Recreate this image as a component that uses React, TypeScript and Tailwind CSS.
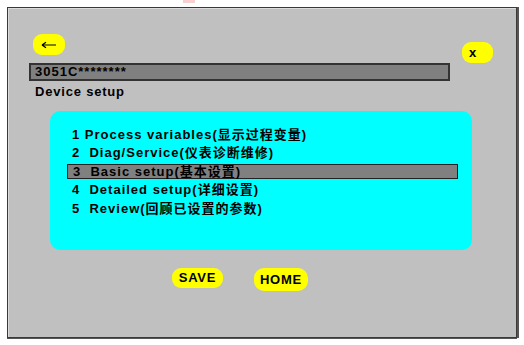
import React from "react";

const menuItems = [
  { label: "1 Process variables(显示过程变量)", selected: false },
  { label: "2  Diag/Service(仪表诊断维修)", selected: false },
  { label: "3  Basic setup(基本设置)", selected: true },
  { label: "4  Detailed setup(详细设置)", selected: false },
  { label: "5  Review(回顾已设置的参数)", selected: false },
];

const font = {
  fontFamily: '"Liberation Sans", "Noto Sans CJK SC", sans-serif',
};

const App: React.FC = () => {
  return (
    <div className="relative h-[345px] w-[524px] bg-white p-[7px]" style={font}>
      {/* faint mark cut at top edge */}
      <div className="absolute left-[183px] top-0 h-[3px] w-[12px] bg-[#f8d0d0]" />

      <div className="flex h-[331px] w-[510px] flex-col border border-[#3a3a3a] bg-[#c0c0c0] shadow-[inset_1px_1px_0_#dcdcdc,2px_0_0_#555,0_1px_0_#555]">
        {/* top row */}
        <div className="mt-[26px] flex items-start">
          <button className="ml-[25px] flex h-[21px] w-[32px] items-center justify-center rounded-[9px] bg-[#ffff00]">
            <svg width="16" height="8" viewBox="0 0 16 8">
              <path d="M1 4H15M1 4L5 1.2M1 4L5 6.8" stroke="#000" strokeWidth="1.2" fill="none" />
            </svg>
          </button>
          <button className="ml-auto mr-[23px] mt-[8px] flex h-[21px] w-[31px] items-center rounded-[9px] bg-[#ffff00] pl-[7px] text-[13px] font-bold leading-none text-black">
            x
          </button>
        </div>

        {/* device tag bar */}
        <div className="ml-[21px] flex h-[18px] w-[421px] items-center border-2 border-[#333] bg-[#808080] pl-[4px] text-[13px] font-bold tracking-[1px] text-black">
          3051C********
        </div>
        <div className="ml-[27px] mt-[3px] text-[13px] font-bold leading-[16px] tracking-[0.8px] text-black">
          Device setup
        </div>

        {/* menu panel */}
        <div className="ml-[42px] mt-[11px] flex h-[139px] w-[422px] flex-col rounded-[10px] bg-[#00ffff] pt-[14px]">
          {menuItems.map((item) => (
            <div key={item.label} className="flex h-[18.5px] items-center">
              <div
                className={`ml-[17px] flex h-[15px] w-[391px] items-center whitespace-pre pl-[5px] text-[13px] font-bold leading-none tracking-[1px] text-black ${
                  item.selected ? "border border-[#222] bg-[#808080]" : ""
                }`}
              >
                {item.label}
              </div>
            </div>
          ))}
        </div>

        {/* bottom buttons */}
        <div className="mt-[18px] flex items-start">
          <button className="ml-[164px] flex h-[20px] w-[51px] items-center justify-center rounded-[9px] bg-[#ffff00] text-[13px] font-bold tracking-[0.8px] text-black">
            SAVE
          </button>
          <button className="ml-[31px] flex h-[23px] w-[54px] items-center justify-center rounded-[10px] bg-[#ffff00] text-[13px] font-bold tracking-[0.8px] text-black">
            HOME
          </button>
        </div>
      </div>
    </div>
  );
};

export default App;
